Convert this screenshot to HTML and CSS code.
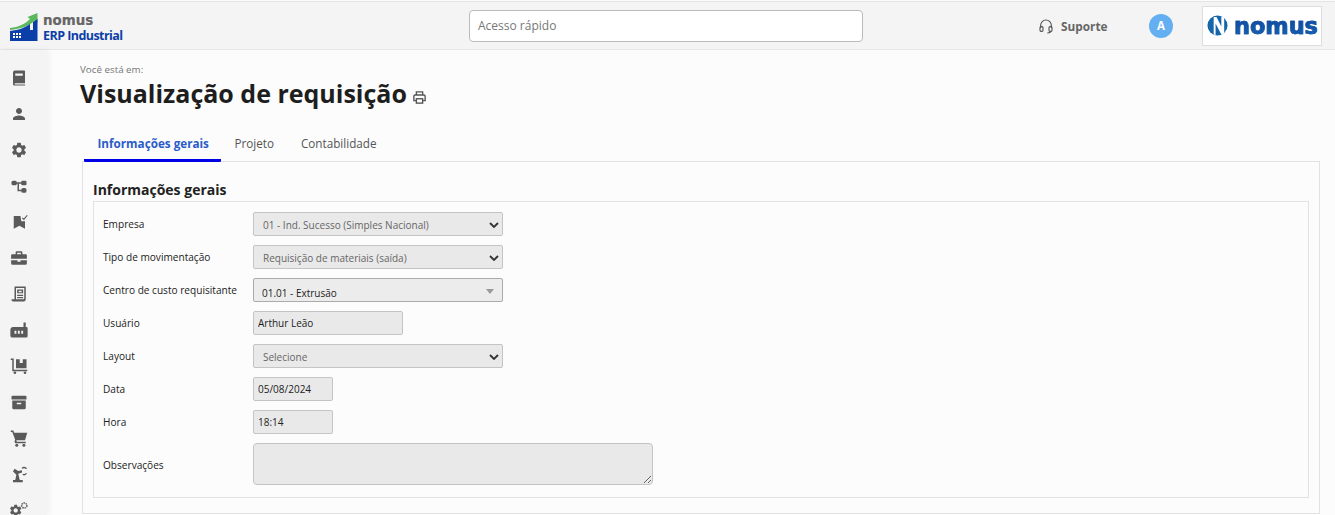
FILE: index.html
```html
<!DOCTYPE html>
<html lang="pt-BR">
<head>
<meta charset="utf-8">
<title>Visualização de requisição</title>
<link rel="stylesheet" href="styles.css">
</head>
<body>
<header class="topbar">
  <div class="brand">
    <svg class="brand-mark" viewBox="0 0 28 28" width="28" height="28">
      <path d="M0 15C9 14 15 11 20 6l-2.500-2L27.500 0v10l-2.600-2.500C19 13 11 16 0 17z" fill="#5cb85c"/>
      <path d="M0 18c9-1 14-3 20-7v6h3V9l4.500-3v22H0z" fill="#0b3ea8"/>
      <path d="M3 20h2v2H3zm3 0h2v2H6zm3 0h2v2H9zM3 23h2v2H3zm3 0h2v2H6zm3 0h2v2H9z" fill="#fff"/>
    </svg>
    <div class="brand-text">
      <span class="brand-nomus">nomus</span>
      <span class="brand-erp">ERP Industrial</span>
    </div>
  </div>
  <div class="search-slot">
    <input class="search" type="text" placeholder="Acesso rápido">
  </div>
  <a class="support">
    <svg viewBox="0 0 24 24" width="16" height="16" fill="none" stroke="#555" stroke-width="1.700">
      <path d="M4 15v-4a8 8 0 0 1 16 0v4"/>
      <rect x="3" y="13" width="4.500" height="7" rx="1.500"/>
      <rect x="16.500" y="13" width="4.500" height="7" rx="1.500"/>
      <path d="M19 20c0 2-2 2.500-5 2.500"/>
    </svg>
    <span>Suporte</span>
  </a>
  <div class="avatar">A</div>
  <div class="client-logo">
    <svg viewBox="0 0 22 22" width="21" height="21">
      <circle cx="11" cy="11" r="10.500" fill="#1565ad"/>
      <path d="M7 2h3l5 10V1.500l3 1.500v16l-3 1.500L9 9v12l-2-.5z" fill="#fff"/>
    </svg>
    <span class="client-name">nomus</span>
  </div>
</header>
<div class="shell">
  <nav class="sidebar">
    <svg class="nav-icon" viewBox="0 0 24 24"><path d="M6.500 2H19a1 1 0 0 1 1 1v16H6.500a1.500 1.500 0 0 0 0 1.500H20V22H6a2 2 0 0 1-2-2V4.500A2.500 2.500 0 0 1 6.500 2zM7 6v3h10V6z" fill-rule="evenodd"/></svg>
    <svg class="nav-icon" viewBox="0 0 24 24"><path d="M12 12c2.210 0 4-1.790 4-4s-1.790-4-4-4-4 1.790-4 4 1.790 4 4 4zm0 2c-2.670 0-8 1.340-8 4v2h16v-2c0-2.660-5.330-4-8-4z"/></svg>
    <svg class="nav-icon" viewBox="0 0 24 24"><path d="M19.140 12.940c.04-.3.06-.61.06-.94 0-.32-.02-.64-.07-.94l2.030-1.580a.49.49 0 0 0 .12-.61l-1.920-3.320a.488.488 0 0 0-.59-.22l-2.390.96c-.5-.38-1.030-.7-1.620-.94l-.36-2.540a.484.484 0 0 0-.48-.41h-3.840c-.24 0-.43.17-.47.41l-.36 2.540c-.59.24-1.130.57-1.620.94l-2.390-.96c-.22-.08-.47 0-.59.22L2.740 8.870c-.12.21-.08.47.12.61l2.030 1.580c-.05.3-.09.63-.09.94s.02.64.07.94l-2.030 1.580a.49.49 0 0 0-.12.61l1.920 3.320c.12.22.37.29.59.22l2.390-.96c.5.38 1.030.7 1.620.94l.36 2.540c.05.24.24.41.48.41h3.840c.24 0 .44-.17.47-.41l.36-2.540c.59-.24 1.130-.56 1.620-.94l2.390.96c.22.08.47 0 .59-.22l1.920-3.320c.12-.22.07-.47-.12-.61l-2.010-1.580zM12 15.600c-1.980 0-3.600-1.620-3.600-3.600s1.620-3.600 3.600-3.600 3.600 1.620 3.600 3.600-1.620 3.600-3.600 3.600z"/></svg>
    <svg class="nav-icon" viewBox="0 0 24 24"><rect x="2" y="5" width="7" height="6" rx="2"/><rect x="15" y="5" width="7" height="6" rx="1.500"/><rect x="15" y="14.500" width="7" height="6.500" rx="2.500"/><path d="M8 7h8v2h-4v8h4v2h-6V9H8z"/></svg>
    <svg class="nav-icon" viewBox="0 0 24 24"><path d="M5 4h9l1 7h5v10l-7.500-4L5 21z"/><path d="M16.500 6.500l2 2 4.500-5.500" fill="none" stroke="#5a5a5a" stroke-width="1.500"/></svg>
    <svg class="nav-icon" viewBox="0 0 24 24"><path d="M9 3h6a1.500 1.500 0 0 1 1.500 1.500V7H21a1.500 1.500 0 0 1 1.500 1.500V13h-21V8.500A1.500 1.500 0 0 1 3 7h4.500V4.500A1.500 1.500 0 0 1 9 3zm.5 2v2h5V5zM1.500 15H10v2h4v-2h8.500v4a2 2 0 0 1-2 2h-17a2 2 0 0 1-2-2z" fill-rule="evenodd"/></svg>
    <svg class="nav-icon" viewBox="0 0 24 24"><path d="M6 2h15v17a3 3 0 0 1-3 3H4a2.500 2.500 0 0 1-2-3h4zm2 2v15h10a1 1 0 0 0 1-1V4zm1.500 2h8v5h-8zm2 1.500v2h4v-2zM9.500 13h8v1.500h-8zm0 3h8v1.500h-8z" fill-rule="evenodd"/></svg>
    <svg class="nav-icon" viewBox="0 0 24 24"><path d="M18 2h3v6h1a1.500 1.500 0 0 1 1.500 1.500V20a2 2 0 0 1-2 2H3a2.500 2.500 0 0 1-2.500-2.500V12A4 4 0 0 1 4 8h14zM6 13v4h2.500v-4zm4.500 0v4H13v-4zm4.500 0v4h2.500v-4z" fill-rule="evenodd"/></svg>
    <svg class="nav-icon" viewBox="0 0 24 24"><path d="M1 2h4v15h18v2H3V4H1zM8 3h14v12H8zm5 0v5h4V3z" fill-rule="evenodd"/><circle cx="6.500" cy="21" r="1.800"/><circle cx="20" cy="21" r="1.800"/></svg>
    <svg class="nav-icon" viewBox="0 0 24 24"><path d="M2 5a1.500 1.500 0 0 1 1.500-1.500h17A1.500 1.500 0 0 1 22 5v3.500H2zM3 10h18v10a1.500 1.500 0 0 1-1.500 1.500h-15A1.500 1.500 0 0 1 3 20zm6 3v2h6v-2z" fill-rule="evenodd"/></svg>
    <svg class="nav-icon" viewBox="0 0 24 24"><path d="M1 2h3.500l1 3H23l-3 10H8.500L9 17h12v2H7l-1-2 .8-3L3 4H1z"/><circle cx="9" cy="21.500" r="2"/><circle cx="18.500" cy="21.500" r="2"/></svg>
    <svg class="nav-icon" viewBox="0 0 24 24"><path d="M4 20h13v3H4zM7 20l1.500-7L4 8.500 6 5l5 3 5-1v3l-5 1.500L13 20z"/><path d="M16 4.500a4 4 0 0 1 6 .5M22 11a4 4 0 0 1-5 1.500" fill="none" stroke="#5a5a5a" stroke-width="1.800"/></svg>
    <svg class="nav-icon" viewBox="0 0 24 24"><path transform="translate(-2 3) scale(.8)" d="M19.140 12.940c.04-.3.06-.61.06-.94 0-.32-.02-.64-.07-.94l2.030-1.580a.49.49 0 0 0 .12-.61l-1.920-3.320a.488.488 0 0 0-.59-.22l-2.390.96c-.5-.38-1.030-.7-1.620-.94l-.36-2.540a.484.484 0 0 0-.48-.41h-3.840c-.24 0-.43.17-.47.41l-.36 2.540c-.59.24-1.130.57-1.620.94l-2.390-.96c-.22-.08-.47 0-.59.22L2.740 8.870c-.12.21-.08.47.12.61l2.030 1.580c-.05.3-.09.63-.09.94s.02.64.07.94l-2.030 1.580a.49.49 0 0 0-.12.61l1.920 3.320c.12.22.37.29.59.22l2.390-.96c.5.38 1.030.7 1.620.94l.36 2.540c.05.24.24.41.48.41h3.840c.24 0 .44-.17.47-.41l.36-2.540c.59-.24 1.130-.56 1.620-.94l2.390.96c.22.08.47 0 .59-.22l1.920-3.320c.12-.22.07-.47-.12-.61l-2.010-1.580zM12 15.600c-1.980 0-3.600-1.620-3.600-3.600s1.620-3.600 3.600-3.600 3.600 1.620 3.600 3.600-1.620 3.600-3.600 3.600z"/><circle cx="19" cy="6" r="3.500" fill="none" stroke="#5a5a5a" stroke-width="2" stroke-dasharray="2 1"/></svg>
  </nav>
  <main class="content">
    <p class="crumb">Você está em:</p>
    <div class="title-row">
      <h1 class="title">Visualização de requisição</h1>
      <svg class="print" viewBox="0 0 24 24" width="15" height="15" fill="none" stroke="#555" stroke-width="2.200">
        <path d="M7 8V3h10v5M7 17H3v-7a2 2 0 0 1 2-2h14a2 2 0 0 1 2 2v7h-4"/>
        <rect x="7" y="14" width="10" height="7"/>
      </svg>
    </div>
    <div class="tabs">
      <a class="tab tab-active">Informações gerais</a>
      <a class="tab">Projeto</a>
      <a class="tab">Contabilidade</a>
    </div>
    <section class="panel">
      <h2 class="panel-title">Informações gerais</h2>
      <div class="fieldset">
        <div class="row">
          <label class="label">Empresa</label>
          <div class="select-wrap">
            <select class="control select" disabled><option>01 - Ind. Sucesso (Simples Nacional)</option></select>
            <svg class="chevron" viewBox="0 0 10 6" width="10" height="6"><path d="M1 1l4 4 4-4" fill="none" stroke="#333" stroke-width="1.800"/></svg>
          </div>
        </div>
        <div class="row">
          <label class="label">Tipo de movimentação</label>
          <div class="select-wrap">
            <select class="control select" disabled><option>Requisição de materiais (saída)</option></select>
            <svg class="chevron" viewBox="0 0 10 6" width="10" height="6"><path d="M1 1l4 4 4-4" fill="none" stroke="#333" stroke-width="1.800"/></svg>
          </div>
        </div>
        <div class="row">
          <label class="label">Centro de custo requisitante</label>
          <div class="combo">
            <span>01.01 - Extrusão</span>
            <i class="combo-arrow"></i>
          </div>
        </div>
        <div class="row">
          <label class="label">Usuário</label>
          <input class="control input input-md" value="Arthur Leão" disabled>
        </div>
        <div class="row">
          <label class="label">Layout</label>
          <div class="select-wrap">
            <select class="control select" disabled><option>Selecione</option></select>
            <svg class="chevron" viewBox="0 0 10 6" width="10" height="6"><path d="M1 1l4 4 4-4" fill="none" stroke="#333" stroke-width="1.800"/></svg>
          </div>
        </div>
        <div class="row">
          <label class="label">Data</label>
          <input class="control input input-sm" value="05/08/2024" disabled>
        </div>
        <div class="row">
          <label class="label">Hora</label>
          <input class="control input input-sm" value="18:14" disabled>
        </div>
        <div class="row">
          <label class="label label-low">Observações</label>
          <textarea class="control textarea" disabled></textarea>
        </div>
      </div>
    </section>
  </main>
</div>
</body>
</html>
```
FILE: styles.css
```css
* { box-sizing: border-box; }
html, body { height: 515px; overflow: hidden; }
body {
  margin: 0;
  padding-top: 1px;
  background: #fcfcfc;
  font-family: "Open Sans", sans-serif;
  color: #222;
}
.topbar {
  height: 49px;
  display: flex;
  align-items: center;
  background: #f4f4f4;
  border-top: 1px solid #e4e4e4;
  border-bottom: 1px solid #e6e6e6;
  padding-left: 10px;
}
.brand { display: flex; align-items: center; gap: 5px; width: 459px; }
.brand-mark { flex: none; margin-top: 2px; }
.brand-text { display: flex; flex-direction: column; margin-top: 5px; }
.brand-nomus {
  font: bold 13.4px/15px "DejaVu Sans", sans-serif;
  -webkit-text-stroke: .2px #666;
  color: #666;
}
.brand-erp {
  font-size: 12.5px;
  line-height: 15px;
  font-weight: 700;
  letter-spacing: -.55px;
  color: #0b3ea8;
}
.search-slot { width: 569px; }
.search {
  display: block;
  width: 394px;
  height: 32px;
  padding: 0 8px;
  background: #fff;
  border: 1px solid #bbb;
  border-radius: 4px;
  font: 12px "Open Sans", sans-serif;
}
.search::placeholder { color: #777; opacity: 1; }
.support {
  display: flex;
  align-items: center;
  gap: 7px;
  width: 111px;
  font-size: 11.8px;
  font-weight: 700;
  color: #666;
}
.avatar {
  width: 24px;
  height: 24px;
  border-radius: 50%;
  background: #64aef2;
  color: #fff;
  font-size: 11.5px;
  font-weight: 700;
  text-align: center;
  line-height: 24px;
}
.client-logo {
  margin-left: 29px;
  width: 120px;
  height: 40px;
  display: flex;
  align-items: center;
  gap: 6px;
  padding-left: 4px;
  background: #fff;
  border: 1px solid #ddd;
}
.client-name {
  font: bold 22.4px/30px "DejaVu Sans", sans-serif;
  -webkit-text-stroke: .6px #0f4fa0;
  background: linear-gradient(#0d3f99, #1768b5);
  -webkit-background-clip: text;
  background-clip: text;
  color: transparent;
}
.shell { display: flex; height: 465px; }
.sidebar {
  flex: none;
  width: 47px;
  height: 465px;
  overflow: hidden;
  display: flex;
  flex-direction: column;
  gap: 18px;
  align-items: flex-start;
  padding: 19px 0 0 10px;
  background: #f4f4f4;
  box-shadow: 2px 0 6px rgba(0, 0, 0, .05);
}
.nav-icon { flex: none; width: 18px; height: 18px; fill: #5a5a5a; }
.content { flex: 1; min-width: 0; padding: 13px 15px 0 33px; }
.crumb { margin: 0; font-size: 9.8px; line-height: 13px; color: #777; }
.title-row { display: flex; align-items: center; gap: 5px; height: 36px; margin-top: -1px; }
.title { margin: 0; font-size: 25px; line-height: 36px; font-weight: 700; color: #1e1e1e; }
.print { margin-top: 9px; }
.tabs { display: flex; height: 35px; margin-top: 16px; padding-left: 4px; }
.tab {
  display: block;
  padding: 0 13.5px;
  font-size: 11.7px;
  line-height: 33px;
  color: #555;
}
.tab-active {
  padding: 0 12px 0 13.5px;
  font-weight: 700;
  color: #2a5bc9;
  border-bottom: 3px solid #0000e6;
  border-radius: 0 0 1px 1px;
}
.panel {
  margin-top: -1px;
  height: 353px;
  padding: 0 10px;
  margin-left: 2px;
  border: 1px solid #e2e2e2;
}
.panel-title {
  margin: 0;
  height: 39px;
  padding-top: 18px;
  font-size: 14px;
  line-height: 20px;
  font-weight: 700;
  color: #222;
}
.fieldset {
  height: 297px;
  padding: 10px 0 0 9px;
  border: 1px solid #e2e2e2;
  display: flex;
  flex-direction: column;
  gap: 9px;
}
.row { display: flex; align-items: center; min-height: 24px; }
.label { flex: none; width: 150px; font-size: 10.1px; color: #222; }
.label-low { padding-top: 2px; }
.control {
  display: block;
  height: 24px;
  background: #e9e9e9;
  border: 1px solid #c4c4c4;
  border-radius: 2px;
  font: 10px "Open Sans", sans-serif;
  margin: 0;
}
.select-wrap { position: relative; width: 250px; }
.select {
  width: 100%;
  padding: 2px 0 0 9px;
  appearance: none;
  color: #666;
  opacity: 1;
}
.chevron { position: absolute; right: 4px; top: 10px; }
.combo {
  width: 250px;
  height: 24px;
  display: flex;
  align-items: flex-end;
  justify-content: space-between;
  padding: 0 8px 1px;
  background: #ececec;
  border: 1px solid #aaa;
  border-radius: 2px;
  font-size: 10px;
  color: #222;
}
.combo-arrow {
  margin-bottom: 6px;
  border-left: 4px solid transparent;
  border-right: 4px solid transparent;
  border-top: 5px solid #999;
}
.input {
  padding: 0 4px;
  color: #222;
  -webkit-text-fill-color: #222;
  opacity: 1;
}
.input-md { width: 150px; }
.input-sm { width: 80px; }
.textarea {
  width: 400px;
  height: 42px;
  border-radius: 4px;
  resize: both;
}
```
